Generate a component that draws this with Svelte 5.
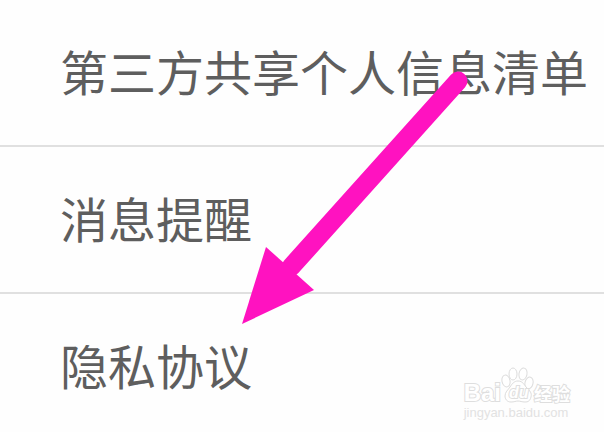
<script lang="ts">
  const items = [
    { label: '第三方共享个人信息清单', href: '#sharing' },
    { label: '消息提醒', href: '#notifications' },
    { label: '隐私协议', href: '#privacy' }
  ];
</script>

<main class="settings">
  <ul class="menu">
    {#each items as item}
      <li class="menu-item">
        <a href={item.href}>{item.label}</a>
      </li>
    {/each}
  </ul>

  <svg class="arrow" width="232" height="260" viewBox="0 0 232 260" aria-hidden="true">
    <path d="M216 17 L49 203" stroke="#ff12c0" stroke-width="19" stroke-linecap="round" />
    <path d="M0 260 L24 183 L72 226 Z" fill="#ff12c0" />
  </svg>

  <div class="watermark">
    <div class="brand">
      <span class="bai">Bai</span>
      <svg class="paw" width="33" height="38" viewBox="0 0 33 38">
        <g fill="#fff" stroke="#dcdcdc" stroke-width="1">
          <ellipse cx="5" cy="14" rx="4" ry="6" transform="rotate(-12 5 14)" />
          <ellipse cx="12" cy="7" rx="4" ry="6" />
          <ellipse cx="22" cy="7" rx="4" ry="6" transform="rotate(12 22 7)" />
          <ellipse cx="28" cy="16" rx="4" ry="6" transform="rotate(15 28 16)" />
          <path d="M17 14 C22 14 23 18 26 21 C29 24 31 26 30 30 C29 34 27 35 24 35 C21 35 19 34 17 34 C15 34 13 35 10 35 C6 35 4 32 4 29 C4 25 7 23 9 20 C11 17 13 14 17 14 Z" />
        </g>
        <text class="du" x="8" y="31">du</text>
      </svg>
      <span class="jingyan">经验</span>
    </div>
    <div class="site">jingyan.baidu.com</div>
  </div>
</main>

<style>
  :global(body) {
    margin: 0;
    background: #fefefe;
  }

  .settings {
    position: relative;
    overflow: hidden;
    font-family: "Liberation Sans", "Noto Sans CJK SC", sans-serif;
  }

  .menu {
    list-style: none;
    margin: 0;
    padding: 0;
  }

  .menu-item {
    border-bottom: 2px solid #e0e0e0;
  }

  .menu-item a {
    display: block;
    padding: 35px 0 40px 60px;
    font-family: "Noto Sans CJK SC", sans-serif;
    font-size: 48px;
    line-height: 70px;
    color: #5e5e5e;
    text-decoration: none;
    white-space: nowrap;
  }

  .menu-item:last-child {
    border-bottom: none;
  }

  .menu-item:last-child a {
    padding-bottom: 33px;
  }

  .arrow {
    position: absolute;
    left: 242px;
    top: 64px;
    pointer-events: none;
  }

  .watermark {
    position: absolute;
    right: 34px;
    bottom: 11px;
    color: #fff;
    -webkit-text-stroke: 2px #dedede;
    paint-order: stroke fill;
  }

  .brand {
    display: flex;
    align-items: flex-end;
    height: 40px;
  }

  .bai {
    font-size: 24px;
    font-weight: bold;
    line-height: 24px;
  }

  .paw {
    overflow: visible;
    paint-order: normal;
  }

  .du {
    font-size: 16px;
    font-weight: bold;
    font-style: italic;
    fill: #fff;
    stroke: #dedede;
    stroke-width: 2px;
    paint-order: stroke fill;
  }

  .jingyan {
    font-family: "Noto Sans CJK SC", sans-serif;
    font-size: 18px;
    font-weight: bold;
    line-height: 24px;
  }

  .site {
    font-size: 13px;
    line-height: 16px;
    color: #e2e2e2;
    -webkit-text-stroke: 0;
  }
</style>
